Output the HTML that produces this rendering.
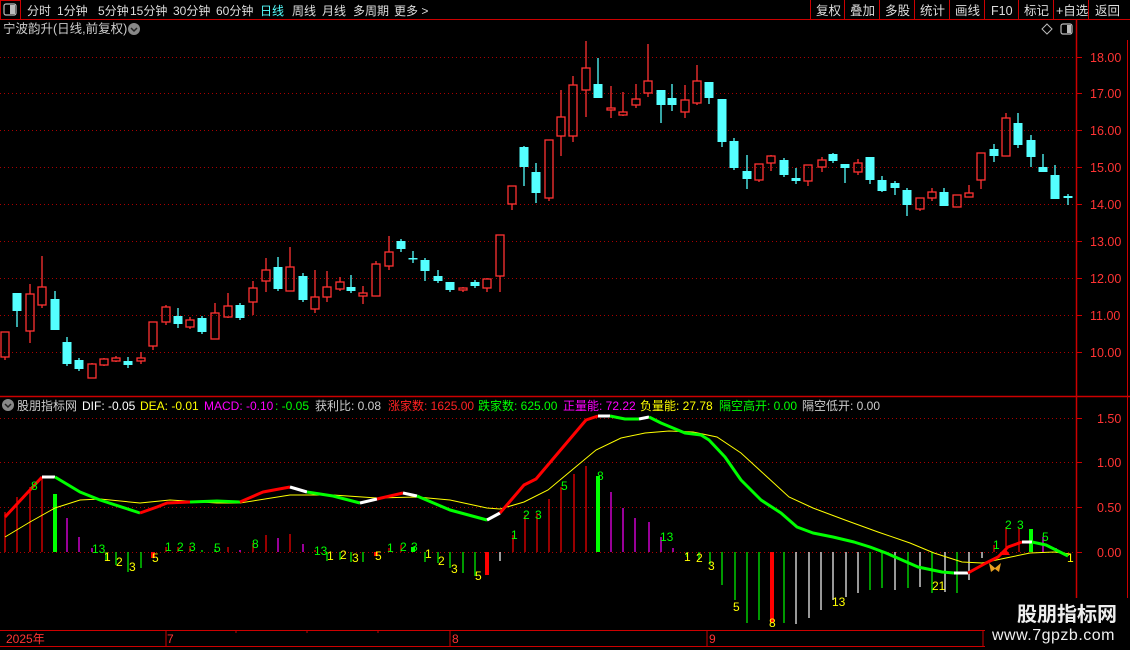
<!DOCTYPE html>
<html><head><meta charset="utf-8"><style>
html,body{margin:0;padding:0;background:#000;width:1130px;height:650px;overflow:hidden}
svg{display:block}
text{font-family:"Liberation Sans","Noto Sans CJK SC",sans-serif}
</style></head><body>
<svg id="s" width="1130" height="650" xmlns="http://www.w3.org/2000/svg">
<rect width="1130" height="650" fill="#000"/>
<line x1="0" y1="19.5" x2="1130" y2="19.5" stroke="#c00" stroke-width="1"/>
<rect x="0.5" y="0.5" width="20" height="19" fill="none" stroke="#c00"/>
<rect x="4" y="4" width="12" height="11" rx="2" fill="none" stroke="#bbb" stroke-width="1.2"/>
<rect x="10" y="5" width="5" height="9" fill="#bbb"/>
<g font-size="12" fill="#ddd">
<text x="27" y="15">分时</text><text x="57" y="15">1分钟</text><text x="98" y="15">5分钟</text>
<text x="130" y="15">15分钟</text><text x="173" y="15">30分钟</text><text x="216" y="15">60分钟</text>
<text x="260" y="15" fill="#5ff">日线</text><text x="292" y="15">周线</text><text x="322" y="15">月线</text>
<text x="353" y="15">多周期</text><text x="394" y="15">更多 &gt;</text>
</g>
<g stroke="#c00" stroke-width="1">
<line x1="810.5" y1="0" x2="810.5" y2="19"/><line x1="844.5" y1="0" x2="844.5" y2="19"/>
<line x1="879.5" y1="0" x2="879.5" y2="19"/><line x1="914.5" y1="0" x2="914.5" y2="19"/>
<line x1="949.5" y1="0" x2="949.5" y2="19"/><line x1="984.5" y1="0" x2="984.5" y2="19"/>
<line x1="1018.5" y1="0" x2="1018.5" y2="19"/><line x1="1053.5" y1="0" x2="1053.5" y2="19"/>
<line x1="1088.5" y1="0" x2="1088.5" y2="19"/>
</g>
<g font-size="12.5" fill="#ddd">
<text x="816" y="15">复权</text><text x="850" y="15">叠加</text><text x="885" y="15">多股</text>
<text x="920" y="15">统计</text><text x="955" y="15">画线</text><text x="991" y="15">F10</text>
<text x="1024" y="15">标记</text><text x="1056" y="15">+自选</text><text x="1095" y="15">返回</text>
</g>
<text x="3" y="33" font-size="12.5" fill="#ccc">宁波韵升(日线,前复权)</text>
<circle cx="134" cy="29" r="6" fill="#888"/>
<path d="M131 28 L134 31 L137 28" stroke="#222" stroke-width="1.5" fill="none"/>
<path d="M1047 24 L1052 29 L1047 34 L1042 29 Z" fill="none" stroke="#bbb"/>
<rect x="1061" y="24" width="11" height="10" rx="2" fill="none" stroke="#bbb" stroke-width="1.2"/>
<rect x="1067" y="25" width="4" height="8" fill="#bbb"/>
<line x1="1076.5" y1="20" x2="1076.5" y2="646" stroke="#c00" stroke-width="1.5"/>
<line x1="1127.5" y1="40" x2="1127.5" y2="630" stroke="#c00" stroke-width="1"/>
<line x1="0" y1="396.5" x2="1130" y2="396.5" stroke="#c00" stroke-width="1.5"/>
<line x1="0" y1="630.5" x2="1076" y2="630.5" stroke="#c00" stroke-width="1"/>
<line x1="0" y1="646.5" x2="1076" y2="646.5" stroke="#c00" stroke-width="1"/>
<g id="grid"></g>
<g id="cand"></g>
<circle cx="8" cy="405" r="6" fill="#888"/>
<path d="M5 404 L8 407 L11 404" stroke="#222" stroke-width="1.5" fill="none"/>
<g font-size="12">
<text x="17" y="410" fill="#ccc">股朋指标网</text>
<text x="82" y="410" fill="#fff">DIF: -0.05</text>
<text x="140" y="410" fill="#ff0">DEA: -0.01</text>
<text x="204" y="410" fill="#f0f">MACD: -0.10</text>
<text x="275" y="410" fill="#0f0">: -0.05</text>
<text x="315" y="410" fill="#ccc">获利比: 0.08</text>
<text x="388" y="410" fill="#f22">涨家数: 1625.00</text>
<text x="478" y="410" fill="#0f0">跌家数: 625.00</text>
<text x="563" y="410" fill="#f0f">正量能: 72.22</text>
<text x="640" y="410" fill="#ff0">负量能: 27.78</text>
<text x="719" y="410" fill="#0f0">隔空高开: 0.00</text>
<text x="802" y="410" fill="#ccc">隔空低开: 0.00</text>
</g>
<g id="ind"></g>
<g stroke="#c00"><line x1="166" y1="630" x2="166" y2="646"/><line x1="450" y1="630" x2="450" y2="646"/><line x1="707" y1="630" x2="707" y2="646"/><line x1="983" y1="630" x2="983" y2="646"/>
<line x1="236" y1="630" x2="236" y2="633"/><line x1="307" y1="630" x2="307" y2="633"/><line x1="378" y1="630" x2="378" y2="633"/></g>
<g font-size="12" fill="#f33"><text x="6" y="643">2025年</text><text x="167" y="643">7</text><text x="452" y="643">8</text><text x="709" y="643">9</text></g>
<rect x="985" y="598" width="145" height="52" fill="#000"/>
<text x="1017" y="621" font-size="20" font-weight="bold" fill="#eee">股朋指标网</text>
<text x="992" y="640" font-size="16" fill="#eee" letter-spacing="0.5">www.7gpzb.com</text>
</svg>
<script>
var NS="http://www.w3.org/2000/svg";
function el(p,t,a){var e=document.createElementNS(NS,t);for(var k in a)e.setAttribute(k,a[k]);document.getElementById(p).appendChild(e);return e;}
var py={"18.00":57,"17.00":93,"16.00":130,"15.00":167,"14.00":204,"13.00":241,"12.00":278,"11.00":315,"10.00":352};
for(var k in py){var y=py[k];
 el("grid","line",{x1:0,y1:y+.5,x2:1076,y2:y+.5,stroke:"#a00","stroke-dasharray":"1 3"});
 el("grid","line",{x1:1076,y1:y+.5,x2:1082,y2:y+.5,stroke:"#c00"});
 var t=el("grid","text",{x:1090,y:y+5,"font-size":"12.5",fill:"#f33"});t.textContent=k;}
var iy={"1.50":418,"1.00":462,"0.50":507,"0.00":552};
for(var k in iy){var y=iy[k];
 el("grid","line",{x1:0,y1:y+.5,x2:1076,y2:y+.5,stroke:"#a00","stroke-dasharray":"1 3"});
 el("grid","line",{x1:1076,y1:y+.5,x2:1082,y2:y+.5,stroke:"#c00"});
 var t=el("grid","text",{x:1097,y:y+5,"font-size":"12.5",fill:"#f33"});t.textContent=k;}
var C=[[5,332,357,332,360,'r'],[17,293,311,293,327,'c'],[30,294,331,284,343,'r'],[42,287,305,256,308,'r'],[55,299,330,291,330,'c'],
[67,342,364,337,366,'c'],[79,360,369,358,371,'c'],[92,364,378,363,378,'r'],[104,359,365,358,366,'r'],[116,358,361,356,362,'r'],
[128,361,365,357,368,'c'],[141,358,361,352,364,'r'],[153,322,346,322,350,'r'],[166,307,322,305,325,'r'],[178,316,324,308,328,'c'],
[190,320,327,317,329,'r'],[202,318,332,316,334,'c'],[215,313,339,303,339,'r'],[228,306,317,293,318,'r'],[240,305,318,303,320,'c'],
[253,288,302,281,315,'r'],[266,270,281,258,292,'r'],[278,267,289,257,291,'c'],[290,267,291,247,291,'r'],[303,276,300,273,302,'c'],
[315,297,309,270,313,'r'],[327,287,297,271,302,'r'],[340,282,289,277,291,'r'],[351,287,291,275,293,'c'],[363,293,296,286,304,'r'],
[376,264,296,261,296,'r'],[389,252,266,236,270,'r'],[401,241,249,239,252,'c'],[413,258,259,251,263,'c'],[425,260,271,258,281,'c'],
[438,276,281,270,283,'c'],[450,282,290,282,292,'c'],[463,288,290,287,292,'r'],[475,282,286,280,288,'c'],[487,279,288,278,292,'r'],
[500,235,276,235,292,'r'],[512,186,204,186,210,'r'],[524,147,167,146,186,'c'],[536,172,193,163,203,'c'],[549,140,198,140,201,'r'],
[561,117,136,90,156,'r'],[573,85,136,76,142,'r'],[586,68,90,41,117,'r'],[598,84,98,58,98,'c'],[611,108,110,86,118,'r'],
[623,112,115,92,116,'r'],[636,99,105,84,108,'r'],[648,81,93,44,97,'r'],[661,90,105,90,123,'c'],[672,98,105,84,111,'c'],
[685,100,112,85,118,'r'],[697,81,103,65,105,'r'],[709,82,98,82,104,'c'],[722,99,142,99,147,'c'],[734,141,168,138,170,'c'],
[747,171,179,155,189,'c'],[759,164,180,164,182,'r'],[771,156,163,155,171,'r'],[784,160,175,158,177,'c'],[796,178,181,168,184,'c'],
[808,165,181,165,186,'r'],[822,160,167,157,172,'r'],[833,154,161,153,163,'c'],[845,164,168,164,183,'c'],[858,163,172,159,175,'r'],
[870,157,180,157,184,'c'],[882,180,191,176,192,'c'],[895,183,188,181,195,'c'],[907,190,205,188,216,'c'],[920,198,209,198,211,'r'],
[932,192,198,188,201,'r'],[944,192,206,188,206,'c'],[957,195,207,195,207,'r'],[969,193,197,185,197,'r'],[981,153,180,153,189,'r'],
[994,149,156,144,162,'c'],[1006,118,156,113,156,'r'],[1018,123,145,113,148,'c'],[1031,140,157,135,167,'c'],[1043,167,172,154,172,'c'],
[1055,175,199,165,199,'c'],[1068,196,198,194,205,'c']];
C.forEach(function(c){var col=c[5]=='r'?'#ff3232':'#54ffff';
 if(c[5]=='r'){
  el("cand","line",{x1:c[0],y1:c[3],x2:c[0],y2:c[1],stroke:col,"stroke-width":1.3});
  el("cand","line",{x1:c[0],y1:c[2],x2:c[0],y2:c[4],stroke:col,"stroke-width":1.3});
  el("cand","rect",{x:c[0]-4,y:c[1],width:8,height:Math.max(c[2]-c[1],1),fill:"none",stroke:col,"stroke-width":1.3});
 }else{
  el("cand","line",{x1:c[0],y1:c[3],x2:c[0],y2:c[4],stroke:col,"stroke-width":1.3});
  el("cand","rect",{x:c[0]-4.5,y:c[1],width:9,height:Math.max(c[2]-c[1],1.5),fill:col});
 }});
var G='#0f0',R='#f00',M='#f0f',W='#fff';
var B=[[5,512,R],[17,497,R],[30,487,R],[42,477,R],[55,494,G,1],[67,518,M],[79,537,M],[92,548,M],[106,560,G],[116,565,G],[128,572,G],[141,568,G],
[153,558,R,1],[166,547,R],[178,547,R],[190,546,R],[202,550,G],[215,549,G],[228,547,R],[240,550,M],[253,543,R],[266,535,R],[278,538,M],[290,534,R],
[303,544,M],[315,550,R],[327,561,G],[340,560,G],[351,562,G],[363,562,G],[376,556,R,1],[389,548,R],[401,545,R],[413,547,G,1],[425,562,G],[438,563,G],
[450,568,G],[463,573,G],[475,576,G],[487,575,R,1],[500,561,W],[513,535,R],[525,515,R],[537,513,R],[549,499,R],[561,487,R],[574,474,R],[586,466,R],
[598,476,G,1],[611,492,M],[623,508,M],[635,518,M],[649,522,M],[661,537,M],[673,548,M],[687,557,G],[699,560,G],[710,565,G],[722,585,G],[735,600,G],
[747,623,G],[759,620,G],[772,623,R,1],[784,623,G],[796,624,W],[809,618,W],[821,610,W],[833,600,W],[846,597,W],[858,593,W],[870,590,G],[882,588,G],
[895,590,W],[908,588,G],[920,587,W],[932,593,G],[945,592,W],[957,593,G],[969,580,W],[982,558,W],[994,545,R],[1006,527,R],[1019,528,R],[1031,529,G,1],[1043,537,M],[1056,548,M]];
B.forEach(function(b){el("ind","line",{x1:b[0],y1:552,x2:b[0],y2:b[1],stroke:b[2],"stroke-width":b[3]?4:1.2});});
var D=[[5,537],[30,522],[55,508],[80,500],[100,499],[140,503],[170,500],[217,503],[240,503],[290,495],[333,495],[377,498],[417,497],[450,500],[487,508],[500,509],[524,502],[548,490],[572,470],[596,450],[621,438],[645,433],[669,431],[693,432],[717,437],[741,453],[765,475],[789,497],[813,508],[845,520],[878,532],[910,543],[934,553],[962,562],[982,563],[1006,558],[1030,553],[1054,552],[1070,554]];
el("ind","polyline",{points:D.map(function(p){return p.join(",")}).join(" "),fill:"none",stroke:"#ff0","stroke-width":1});
var S=[["#f00",[[5,517],[42,477]]],["#fff",[[42,477],[55,477]]],["#0f0",[[55,477],[80,492],[100,500],[140,513]]],
["#f00",[[140,513],[157,507],[167,503],[190,502]]],["#0f0",[[190,502],[217,501],[240,502]]],["#f00",[[240,502],[263,492],[290,487]]],
["#fff",[[290,487],[307,492]]],["#0f0",[[307,492],[333,496],[360,503]]],["#fff",[[360,503],[377,499]]],["#f00",[[377,499],[403,493]]],
["#fff",[[403,493],[417,496]]],["#0f0",[[417,496],[450,510],[487,520]]],["#fff",[[487,520],[500,513]]],
["#f00",[[500,513],[524,485],[536,479],[586,420],[598,416]]],["#fff",[[598,416],[610,416]]],["#0f0",[[610,416],[625,419],[639,419]]],
["#fff",[[639,419],[649,417]]],["#0f0",[[649,417],[661,423],[685,433],[701,435],[709,440],[725,457],[741,480],[761,500],[781,513],[797,527],[813,533],[833,537],[854,542],[870,547],[886,553],[902,560],[918,567],[942,572],[954,573]]],
["#fff",[[954,573],[968,573]]],["#f00",[[968,573],[986,563],[998,557],[1008,547],[1022,542]]],["#fff",[[1022,542],[1032,542]]],["#0f0",[[1032,542],[1046,545],[1068,556]]]];
S.forEach(function(s){el("ind","polyline",{points:s[1].map(function(p){return p.join(",")}).join(" "),fill:"none",stroke:s[0],"stroke-width":3,"stroke-linejoin":"round"});});
var Y='#ff0';
var L=[[31,490,"8",G],[92,553,"13",G],[104,561,"1",Y],[116,566,"2",Y],[129,571,"3",Y],[152,562,"5",Y],[165,551,"1",G],[177,551,"2",G],[189,551,"3",G],
[214,552,"5",G],[252,548,"8",G],[314,555,"13",G],[327,560,"1",Y],[340,559,"2",Y],[352,562,"3",Y],[375,560,"5",Y],[387,552,"1",G],[400,551,"2",G],[411,551,"3",G],
[425,558,"1",Y],[438,565,"2",Y],[451,573,"3",Y],[475,580,"5",Y],[511,539,"1",G],[523,519,"2",G],[535,519,"3",G],[561,490,"5",G],[597,480,"8",G],
[660,541,"13",G],[684,561,"1",Y],[696,562,"2",Y],[708,570,"3",Y],[733,611,"5",Y],[769,627,"8",Y],[832,606,"13",Y],[932,590,"21",Y],[993,549,"1",G],
[1005,529,"2",G],[1017,529,"3",G],[1042,541,"5",G],[1067,562,"1",Y]];
L.forEach(function(l){var t=el("ind","text",{x:l[0],y:l[1],"font-size":"12",fill:l[3]});t.textContent=l[2];});
el("ind","path",{d:"M1000 555 L1005 548 L1010 555 Z",fill:"#f00"});
el("ind","path",{d:"M989 563 L995 568 L1001 563 L999 572 L995 569 L991 572 Z",fill:"#e8a020"});
</script>
</body></html>
